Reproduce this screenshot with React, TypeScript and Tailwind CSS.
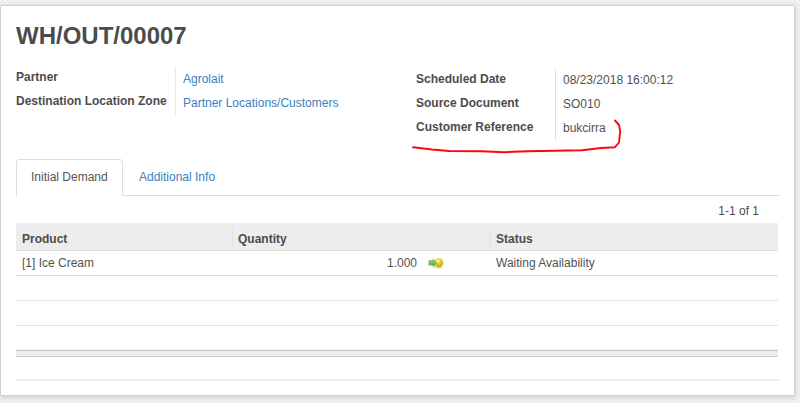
import React from "react";

type Field = { label: string; value: string; link?: boolean };

const leftFields: Field[] = [
  { label: "Partner", value: "Agrolait", link: true },
  { label: "Destination Location Zone", value: "Partner Locations/Customers", link: true },
];

const rightFields: Field[] = [
  { label: "Scheduled Date", value: "08/23/2018 16:00:12" },
  { label: "Source Document", value: "SO010" },
  { label: "Customer Reference", value: "bukcirra" },
];

function FieldGroup({ fields, labelClass, valueClass }: { fields: Field[]; labelClass: string; valueClass: string }) {
  return (
    <div className="flex">
      <div className={labelClass}>
        {fields.map((f) => (
          <div key={f.label} className="h-6 leading-5 font-bold">{f.label}</div>
        ))}
      </div>
      <div className={valueClass}>
        {fields.map((f) => (
          <div key={f.label} className={f.link ? "h-6 leading-6 text-[#3a80be]" : "h-6 leading-[22px] text-[#525252]"}>{f.value}</div>
        ))}
      </div>
    </div>
  );
}

function MoveIcon() {
  return (
    <svg width="16" height="12" viewBox="0 0 16 12" className="ml-[11px]">
      <defs>
        <radialGradient id="ball" cx="0.4" cy="0.3" r="0.7">
          <stop offset="0" stopColor="#fff9b0" />
          <stop offset="0.4" stopColor="#ecd532" />
          <stop offset="1" stopColor="#c4a20c" />
        </radialGradient>
        <linearGradient id="arrow" x1="0" y1="0" x2="0" y2="1">
          <stop offset="0" stopColor="#9bd679" />
          <stop offset="1" stopColor="#55a532" />
        </linearGradient>
      </defs>
      <ellipse cx="10" cy="10.6" rx="5" ry="1" fill="#dedcc8" />
      <circle cx="10.7" cy="5.8" r="4.5" fill="url(#ball)" />
      <path d="M0.8 3.6h4.2V1.8L9 5.9 5 10V8.2H0.8z" fill="url(#arrow)" stroke="#77b955" strokeWidth="0.5" />
    </svg>
  );
}

export default function App() {
  return (
    <div className="h-[403px] w-[800px] overflow-hidden bg-[#f1f1f1] bg-[conic-gradient(#ebebeb_25%,#f5f5f5_0_50%,#ebebeb_0_75%,#f5f5f5_0)] bg-[length:4px_4px] pt-[5px] font-['Liberation_Sans',Arial,sans-serif] text-[12px] text-[#4c4c4c]">
      <main className="relative h-[391px] w-[795px] border border-[#d2d2da] bg-white pl-[15px] shadow-[0_1px_5px_rgba(0,0,0,0.18)]">
        <h1 className="h-[61px] pt-[15px] text-[24px] leading-[30px] font-bold">WH/OUT/00007</h1>

        <section className="flex h-[92px]">
          <div className="w-[400px]">
            <FieldGroup fields={leftFields} labelClass="w-[159px]" valueClass="h-12 border-l border-[#e8e8e8] pl-[7px]" />
          </div>
          <div className="pt-[2px]">
            <FieldGroup fields={rightFields} labelClass="w-[139px]" valueClass="h-[71px] border-l border-[#dddddd] pl-[7px]" />
          </div>
        </section>

        <nav className="flex h-[37px] w-[764px] border-b border-[#dddddd]">
          <div className="h-[37px] w-[107px] rounded-t border border-b-0 border-[#dddddd] bg-white pl-[14px] leading-[34px] text-[#555555]">Initial Demand</div>
          <div className="pl-4 leading-[36px] text-[#3a80be]">Additional Info</div>
        </nav>

        <div className="h-[27px] w-[743px] text-right leading-[31px]">1-1 of 1</div>

        <div className="w-[762px]">
          <div className="flex h-[28px] border-b border-[#dddddd] bg-[#ededed] pt-1 leading-[25px] font-bold">
            <div className="w-[216px] pl-[6px]">Product</div>
            <div className="w-[258px] border-l border-[#e3e3e3] pl-[5px]">Quantity</div>
            <div className="border-l border-[#e3e3e3] pl-[5px]">Status</div>
          </div>
          <div className="flex h-[25px] items-center border-b border-[#dddddd] text-[#525252]">
            <div className="w-[216px] pl-[6px]">[1] Ice Cream</div>
            <div className="flex w-[258px] items-center justify-end pr-[46px]">
              <span>1.000</span>
              <MoveIcon />
            </div>
            <div className="pl-[6px]">Waiting Availability</div>
          </div>
          <div className="h-[25px] border-b border-[#e2e2e2]" />
          <div className="h-[25px] border-b border-[#e2e2e2]" />
          <div className="h-[24px] border-b border-[#ededed]" />
          <div className="h-[7px] border-t border-b border-[#c9c9c9] bg-[#ededed]" />
        </div>
        <div className="h-[24px] w-[764px] border-b-2 border-[#eeeeee]" />

        <svg className="pointer-events-none absolute top-[109px] left-[406px]" width="225" height="50" viewBox="0 0 225 50" fill="none" stroke="#fa0712" strokeWidth="1.9" strokeLinecap="round" strokeLinejoin="round">
          <path d="M6 32.3L25 34.5L42 36L75 36.3L97 37.2L120 36.3L175 35.2L194 33L208 32.2L212 27.5L213.2 16L212 10L208 5.5" />
        </svg>
      </main>
    </div>
  );
}
